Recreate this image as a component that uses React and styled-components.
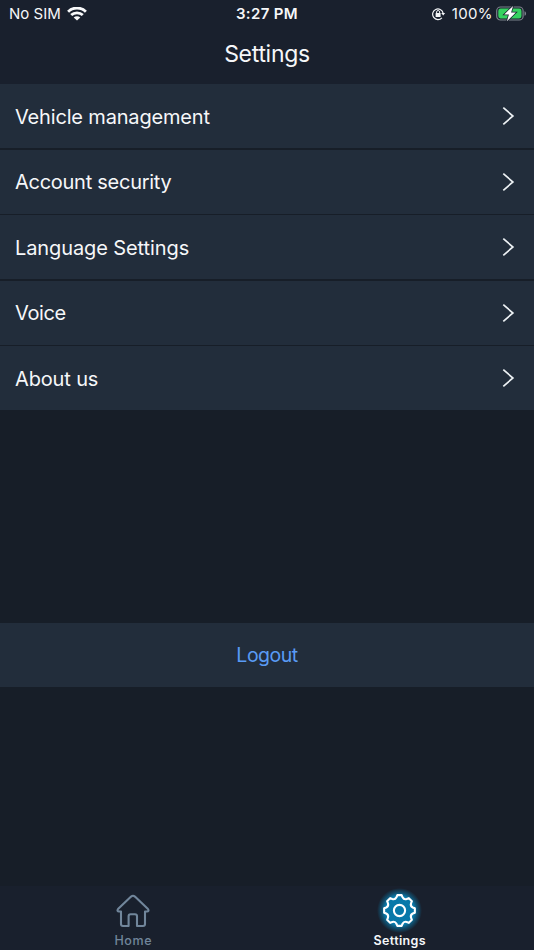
import React from "react";
import styled, { createGlobalStyle } from "styled-components";

const GlobalStyle = createGlobalStyle`
  * { box-sizing: border-box; }
  body { margin: 0; background: #171e28; }
`;

const Screen = styled.div`
  width: 534px;
  height: 950px;
  display: flex;
  flex-direction: column;
  overflow: hidden;
  background: #171e28;
  color: #f6f7f9;
  font-family: Inter, "Liberation Sans", sans-serif;
`;

const Header = styled.header`
  height: 84px;
  flex: none;
  background: #19202d;
`;

const StatusBar = styled.div`
  height: 28px;
  display: grid;
  grid-template-columns: 1fr auto 1fr;
  align-items: center;
  padding: 0 7px 0 9px;
  font-size: 15px;
  line-height: 28px;
`;

const StatusGroup = styled.div`
  height: 28px;
  display: flex;
  align-items: center;
  justify-content: ${(p) => (p.$end ? "flex-end" : "flex-start")};
  svg { flex: none; display: block; }
`;

const StatusText = styled.span`
  letter-spacing: ${(p) => p.$spacing || "0"};
  margin-right: ${(p) => p.$gap || "0"};
`;

const Clock = styled.div`
  padding-right: 2px;
  font-weight: 600;
  letter-spacing: 0.35px;
`;

const Title = styled.h1`
  margin: 0;
  height: 53px;
  font-size: 23px;
  font-weight: 400;
  line-height: 53px;
  letter-spacing: -0.3px;
  text-align: center;
`;

const List = styled.nav`
  display: flex;
  flex-direction: column;
  gap: 1.6px;
`;

const Row = styled.button`
  height: 64px;
  display: flex;
  align-items: center;
  justify-content: space-between;
  padding: 0 19px 0 15px;
  border: 0;
  background: #222d3b;
  color: inherit;
  font: inherit;
  font-size: 20px;
  svg { display: block; }
`;

const RowLabel = styled.span`
  padding-top: 1px;
  letter-spacing: ${(p) => p.$spacing};
`;

const Logout = styled.button`
  height: 64px;
  margin-top: 212.6px;
  padding: 0;
  border: 0;
  background: #222d3b;
  color: #599bf5;
  font: inherit;
  font-size: 19.5px;
  letter-spacing: -0.5px;
`;

const TabBar = styled.footer`
  height: 64px;
  margin-top: auto;
  display: grid;
  grid-template-columns: 1fr 1fr;
  padding-right: 1px;
  background: #19202d;
`;

const Tab = styled.button`
  display: flex;
  flex-direction: column;
  align-items: center;
  justify-content: flex-start;
  gap: 4px;
  padding: 7px 0 0;
  border: 0;
  background: none;
  color: ${(p) => (p.$active ? "#f6f7f9" : "#71869b")};
  font: inherit;
  font-size: 12.5px;
  font-weight: ${(p) => (p.$active ? 600 : 500)};
  line-height: 16px;
  letter-spacing: ${(p) => (p.$active ? "0.35px" : "0.6px")};
  svg { display: block; overflow: visible; }
`;

const WifiIcon = () => (
  <svg width="20" height="15" viewBox="0 0 20 15" fill="none" stroke="#f8f9fa" strokeWidth="2.8">
    <path d="M1.1 4.7C6-.2 14-.2 18.9 4.7" />
    <path d="M4.2 8.1C7.4 5 12.6 5 15.8 8.1" />
    <path d="M10 13.5 6.7 10.4C8.5 8.8 11.5 8.8 13.3 10.4Z" fill="#f8f9fa" stroke="none" />
  </svg>
);

const LockIcon = () => (
  <svg width="14" height="14" viewBox="0 0 14 14" fill="none" stroke="#f3f5f7" strokeWidth="1.2">
    <path d="M9.9 10.8A5.3 5.3 0 1 1 11.1 6" />
    <path d="M9.2 6h4l-2 2.6z" fill="#f3f5f7" stroke="none" />
    <rect x="3.6" y="6.1" width="5" height="3.8" rx=".5" fill="#f3f5f7" stroke="none" />
    <path d="M4.6 6.5V5a1.5 1.5 0 0 1 3 0v1.5" strokeWidth="1" />
  </svg>
);

const BatteryIcon = () => (
  <svg width="31" height="18" viewBox="0 0 31 18">
    <rect x=".7" y="2" width="26.4" height="13" rx="3.8" fill="none" stroke="#7b828b" strokeWidth="1.2" />
    <rect x="2.3" y="3.6" width="23.2" height="9.8" rx="2.3" fill="#35d260" />
    <path d="M28.5 6.2c2.1.7 2.1 3.9 0 4.6z" fill="#7b828b" />
    <path d="M17.1.9 8.2 9.4h4.7l-2 6.8 9-8.6h-4.8z" fill="#fff" stroke="#19202d" strokeWidth="1.5" paintOrder="stroke" />
  </svg>
);

const Chevron = () => (
  <svg width="13" height="20" viewBox="0 0 13 20" fill="none" stroke="#edf1f4" strokeWidth="1.7">
    <path d="m1.3 1.7 9.6 8.3-9.6 8.3" />
  </svg>
);

const HomeIcon = () => (
  <svg width="36" height="36" viewBox="0 0 36 36" fill="none" stroke="#71869b" strokeWidth="2.1" strokeLinejoin="round">
    <path d="M16.1 3.6 3 16.1C1.9 17.3 2.6 18.5 4 18.5H6V31Q6 33 8 33H13.6V23.2Q13.6 21.2 15.6 21.2H20Q22 21.2 22 23.2V33H28Q30 33 30 31V18.5H32C33.4 18.5 34.1 17.3 33 16.1L19.9 3.6Q18 1.9 16.1 3.6Z" />
  </svg>
);

const teeth = [0, 45, 90, 135, 180, 225, 270, 315];

// Joins eight rounded teeth, each spanning 45 degrees around the hub.
const gearPath = () => {
  const point = (radius, degrees) => {
    const a = ((degrees - 90) * Math.PI) / 180;
    return `${(radius * Math.cos(a)).toFixed(2)} ${(radius * Math.sin(a)).toFixed(2)}`;
  };
  return (
    teeth
      .map((t, i) =>
        `${i ? "L" : "M"}${point(15.5, t - 8)}L${point(15.5, t + 8)}` +
        `L${point(13.6, t + 13)}` +
        `Q${point(11.5, t + 22.5)} ${point(13.6, t + 32)}` +
        `L${point(15.5, t + 37)}`
      )
      .join("") + "Z"
  );
};

const GearIcon = () => (
  <svg width="36" height="36" viewBox="-17.5 -17.5 36 36">
    <defs>
      <radialGradient id="gear-glow">
        <stop offset="0" stopColor="#087bac" />
        <stop offset=".65" stopColor="#087bac" />
        <stop offset=".8" stopColor="#087bac" stopOpacity=".5" />
        <stop offset="1" stopColor="#087bac" stopOpacity="0" />
      </radialGradient>
    </defs>
    <circle r="22.5" fill="url(#gear-glow)" />
    <path d={gearPath()} fill="#0878a9" stroke="#fff" strokeWidth="2.1" strokeLinejoin="round" />
    <circle r="5.6" fill="none" stroke="#fff" strokeWidth="2.1" />
  </svg>
);

const items = [
  { label: "Vehicle management", spacing: "-0.17px" },
  { label: "Account security", spacing: "-0.27px" },
  { label: "Language Settings", spacing: "-0.1px" },
  { label: "Voice", spacing: "-0.4px" },
  { label: "About us", spacing: "-0.15px" },
];

export default function App() {
  return (
    <Screen>
      <GlobalStyle />
      <Header>
        <StatusBar>
          <StatusGroup>
            <StatusText $gap="6px">No SIM</StatusText>
            <WifiIcon />
          </StatusGroup>
          <Clock>3:27 PM</Clock>
          <StatusGroup $end>
            <StatusText $gap="6px"><LockIcon /></StatusText>
            <StatusText $gap="3px" $spacing="0.4px">100%</StatusText>
            <BatteryIcon />
          </StatusGroup>
        </StatusBar>
        <Title>Settings</Title>
      </Header>
      <List>
        {items.map((item) => (
          <Row key={item.label}>
            <RowLabel $spacing={item.spacing}>{item.label}</RowLabel>
            <Chevron />
          </Row>
        ))}
      </List>
      <Logout>Logout</Logout>
      <TabBar>
        <Tab>
          <HomeIcon />
          Home
        </Tab>
        <Tab $active>
          <GearIcon />
          Settings
        </Tab>
      </TabBar>
    </Screen>
  );
}
